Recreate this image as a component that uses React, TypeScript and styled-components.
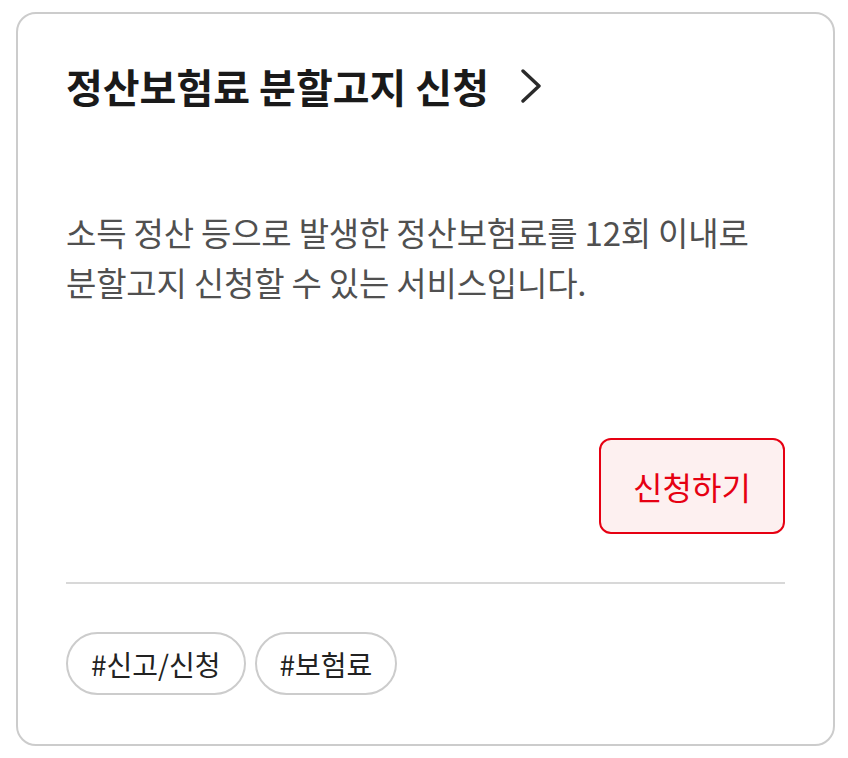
import styled, { createGlobalStyle } from "styled-components";

const GlobalStyle = createGlobalStyle`
  body {
    margin: 0;
    background: #ffffff;
    font-family: "Noto Sans CJK KR", "Noto Sans", sans-serif;
  }
`;

const Page = styled.div`
  padding: 12px 13px 12px 16px;
`;

const Card = styled.section`
  box-sizing: border-box;
  height: 734px;
  border: 2px solid #cccccc;
  border-radius: 20px;
  padding: 0 48px;
  display: flex;
  flex-direction: column;
`;

const TitleRow = styled.a`
  display: flex;
  align-items: center;
  gap: 31px;
  margin-top: 46px;
  color: #1a1a1a;
  text-decoration: none;
`;

const Title = styled.h2`
  margin: 0;
  font-size: 40px;
  font-weight: 700;
  letter-spacing: 0;
  line-height: 52px;
`;

const Description = styled.p`
  margin: 95px 0 0;
  font-size: 33px;
  line-height: 50px;
  color: #505050;
  letter-spacing: -0.2px;
`;

const Actions = styled.div`
  display: flex;
  justify-content: flex-end;
  margin-top: 131px;
`;

const ApplyButton = styled.button`
  width: 186px;
  height: 96px;
  border: 2px solid #e60012;
  border-radius: 12px;
  background: #fdf0f0;
  color: #e60012;
  font-family: inherit;
  font-size: 32px;
  cursor: pointer;
`;

const Divider = styled.hr`
  margin: 48px 0 0;
  border: 0;
  border-top: 2px solid #d8d8d8;
`;

const Tags = styled.ul`
  display: flex;
  gap: 9px;
  list-style: none;
  margin: 48px 0 0;
  padding: 0;
`;

const Tag = styled.li`
  box-sizing: border-box;
  height: 63px;
  padding: 0 23px;
  display: flex;
  align-items: center;
  border: 2px solid #cccccc;
  border-radius: 32px;
  font-size: 28px;
  color: #222222;
`;

function Chevron() {
  return (
    <svg width="22" height="34" viewBox="0 0 22 34" fill="none">
      <path
        d="M3 2 L19 17 L3 32"
        stroke="#2a2a2a"
        strokeWidth="3.4"
        strokeLinecap="round"
        strokeLinejoin="round"
      />
    </svg>
  );
}

export default function App() {
  const tags = ["#신고/신청", "#보험료"];
  return (
    <Page>
      <GlobalStyle />
      <Card>
        <TitleRow href="#">
          <Title>정산보험료 분할고지 신청</Title>
          <Chevron />
        </TitleRow>
        <Description>
          소득 정산 등으로 발생한 정산보험료를 12회 이내로
          <br />
          분할고지 신청할 수 있는 서비스입니다.
        </Description>
        <Actions>
          <ApplyButton>신청하기</ApplyButton>
        </Actions>
        <Divider />
        <Tags>
          {tags.map((t) => (
            <Tag key={t}>{t}</Tag>
          ))}
        </Tags>
      </Card>
    </Page>
  );
}
